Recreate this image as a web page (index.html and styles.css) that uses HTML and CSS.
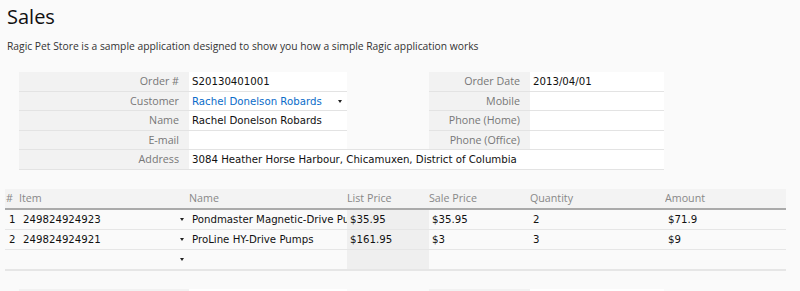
FILE: index.html
```html
<!DOCTYPE html>
<html>
<head>
<meta charset="utf-8">
<link rel="stylesheet" href="styles.css">
</head>
<body>
<div class="page">
  <h1 class="title">Sales</h1>
  <p class="desc">Ragic Pet Store is a sample application designed to show you how a simple Ragic application works</p>

  <div class="form">
    <div class="lbl">Order #</div><div class="val">S20130401001</div><div class="gap"></div><div class="lbl">Order Date</div><div class="val">2013/04/01</div>
    <div class="lbl">Customer</div><div class="val"><span class="link">Rachel Donelson Robards</span><span class="caret"></span></div><div class="gap"></div><div class="lbl">Mobile</div><div class="val"></div>
    <div class="lbl">Name</div><div class="val">Rachel Donelson Robards</div><div class="gap"></div><div class="lbl">Phone (Home)</div><div class="val"></div>
    <div class="lbl">E-mail</div><div class="val"></div><div class="gap line"></div><div class="lbl">Phone (Office)</div><div class="val"></div>
    <div class="lbl">Address</div><div class="val wide">3084 Heather Horse Harbour, Chicamuxen, District of Columbia</div>
  </div>

  <div class="sub">
    <div class="row head">
      <div class="c num">#</div><div class="c">Item</div><div class="c">Name</div><div class="c">List Price</div><div class="c">Sale Price</div><div class="c">Quantity</div><div class="c">Amount</div>
    </div>
    <div class="row">
      <div class="c num">1</div><div class="c pick">249824924923<span class="caret"></span></div><div class="c">Pondmaster Magnetic-Drive Pumps</div><div class="c ro">$35.95</div><div class="c">$35.95</div><div class="c">2</div><div class="c">$71.9</div>
    </div>
    <div class="row">
      <div class="c num">2</div><div class="c pick">249824924921<span class="caret"></span></div><div class="c">ProLine HY-Drive Pumps</div><div class="c ro">$161.95</div><div class="c">$3</div><div class="c">3</div><div class="c">$9</div>
    </div>
    <div class="row last">
      <div class="c num"></div><div class="c pick"><span class="caret"></span></div><div class="c"></div><div class="c ro"></div><div class="c"></div><div class="c"></div><div class="c"></div>
    </div>
  </div>

  <div class="form next">
    <div class="lbl"></div><div class="val"></div><div class="gap"></div><div class="lbl"></div><div class="val"></div>
  </div>
</div>
</body>
</html>
```

FILE: styles.css
```css
html, body {
  margin: 0;
  padding: 0;
  background: #fafafa;
  height: 291px;
  overflow: hidden;
}
.page {
  font-family: "Open Sans", sans-serif;
  color: #222;
  height: 291px;
  overflow: hidden;
}
.title {
  margin: 0;
  padding: 4px 0 0 7px;
  font-size: 20px;
  font-weight: 400;
  line-height: 26px;
  color: #111;
}
.desc {
  margin: 9px 0 0 7px;
  font-size: 10.3px;
  line-height: 14px;
  color: #333;
}
.form {
  display: grid;
  grid-template-columns: 170px 158px 82px 101px 134px;
  grid-auto-rows: 19.6px;
  margin: 19px 0 0 19px;
  width: 645px;
}
.lbl {
  background: #f2f2f2;
  border-bottom: 1px solid #e3e3e3;
  text-align: right;
  padding-right: 10px;
  font-size: 10.7px;
  color: #777;
  line-height: 19px;
  white-space: nowrap;
}
.val {
  background: #fff;
  border-bottom: 1px solid #e3e3e3;
  padding-left: 3px;
  font-family: "DejaVu Sans", sans-serif;
  font-size: 10.2px;
  color: #111;
  line-height: 19px;
  position: relative;
  white-space: nowrap;
  overflow: hidden;
}
.gap.line {
  border-bottom: 1px solid #e3e3e3;
}
.wide {
  grid-column: 2 / 6;
}
.link {
  color: #0a6cc9;
}
.caret {
  position: absolute;
  right: 5px;
  top: 8px;
  width: 0;
  height: 0;
  border-left: 2px solid transparent;
  border-right: 2px solid transparent;
  border-top: 3px solid #222;
}
.sub {
  margin: 19px 0 0 5px;
  width: 781px;
}
.row {
  display: grid;
  grid-template-columns: 14px 170px 158px 82px 101px 135px 121px;
  height: 19px;
  border-bottom: 1px solid #e6e6e6;
}
.row.head {
  background: #f3f3f3;
  border-bottom: 2px solid #aaa;
}
.row.last {
  border-bottom: 2px solid #e6e6e6;
}
.c {
  padding-left: 3px;
  font-family: "DejaVu Sans", sans-serif;
  font-size: 10.2px;
  line-height: 19px;
  color: #111;
  white-space: nowrap;
  overflow: hidden;
  position: relative;
}
.head .c {
  padding-left: 0;
  font-family: "Open Sans", sans-serif;
  font-size: 10.7px;
  color: #888;
}
.c.num {
  padding-left: 4px;
}
.head .c.num {
  padding-left: 1px;
}
.c.pick {
  padding-left: 4px;
}
.c.ro {
  background: #efefef;
}
.next {
  margin-top: 18px;
}
.next .lbl, .next .val {
  border-bottom: none;
}
```
